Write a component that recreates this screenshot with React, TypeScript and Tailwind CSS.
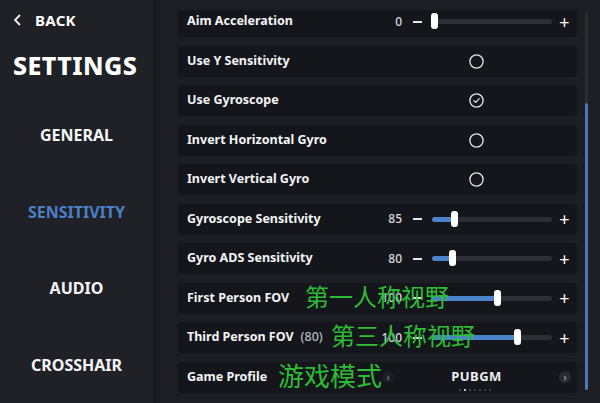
import React from 'react';

type Row =
  | { kind: 'slider'; label: string; value: string; pos: number; note?: string }
  | { kind: 'check'; label: string; checked: boolean }
  | { kind: 'profile'; label: string; value: string };

const rows: Row[] = [
  { kind: 'slider', label: 'Aim Acceleration', value: '0', pos: 2 },
  { kind: 'check', label: 'Use Y Sensitivity', checked: false },
  { kind: 'check', label: 'Use Gyroscope', checked: true },
  { kind: 'check', label: 'Invert Horizontal Gyro', checked: false },
  { kind: 'check', label: 'Invert Vertical Gyro', checked: false },
  { kind: 'slider', label: 'Gyroscope Sensitivity', value: '85', pos: 22 },
  { kind: 'slider', label: 'Gyro ADS Sensitivity', value: '80', pos: 20 },
  { kind: 'slider', label: 'First Person FOV', value: '100', pos: 65 },
  { kind: 'slider', label: 'Third Person FOV', value: '100', pos: 85, note: '(80)' },
  { kind: 'profile', label: 'Game Profile', value: 'PUBGM' },
];

const navItems = ['GENERAL', 'SENSITIVITY', 'AUDIO', 'CROSSHAIR'];

function Slider({ value, pos }: { value: string; pos: number }) {
  return (
    <div className="flex h-full w-[197px] items-center">
      <div className="w-[22px] text-right text-[12px] font-medium text-[#d8dae0]">{value}</div>
      <div className="flex w-[30px] justify-center">
        <div className="h-[2px] w-[9px] bg-[#e6e7ea]" />
      </div>
      <div className="relative h-[5px] w-[120px] rounded-full bg-[#2b2e35]">
        <div className="absolute left-0 top-0 h-full rounded-l-full bg-[#4b82cc]" style={{ width: pos }} />
        <div
          className="absolute top-[-6px] h-[16px] w-[7px] rounded-[3px] bg-white"
          style={{ left: Math.max(pos - 3.5, -1) }}
        />
      </div>
      <div className="flex w-[25px] justify-center text-[18px] leading-none text-white">+</div>
    </div>
  );
}

function Check({ checked }: { checked: boolean }) {
  return (
    <div className="flex h-full w-[197px] items-center pl-[89px]">
      <svg width="15" height="15" viewBox="0 0 15 15">
        <circle cx="7.5" cy="7.5" r="6.6" fill="none" stroke="#e8e9ec" strokeWidth="1.3" />
        {checked && (
          <path d="M4.8 7.6 L6.8 9.4 L10.2 5.6" fill="none" stroke="#e8e9ec" strokeWidth="1.2" strokeLinecap="round" strokeLinejoin="round" />
        )}
      </svg>
    </div>
  );
}

function Profile({ value }: { value: string }) {
  return (
    <div className="relative flex h-full w-[197px] items-center justify-between pl-[2px] pr-[6px]">
      <div className="flex h-[12px] w-[12px] items-center justify-center rounded-full bg-[#1c1f26] text-[10px] leading-none text-[#8a8d95]">‹</div>
      <div className="text-[13px] font-bold tracking-[0.5px] text-[#eceef1]">{value}</div>
      <div className="flex h-[12px] w-[12px] items-center justify-center rounded-full bg-[#272a31] text-[10px] leading-none text-[#b8bbc2]">›</div>
      <div className="absolute bottom-[2px] left-[79px] flex gap-[3px]">
        {[0, 1, 2, 3, 4, 5, 6].map((i) => (
          <div key={i} className={`h-[2px] w-[2px] rounded-full ${i === 1 ? 'bg-white' : 'bg-[#4a4d55]'}`} />
        ))}
      </div>
    </div>
  );
}

export default function App() {
  return (
    <div
      className="flex h-[403px] w-[600px] overflow-hidden bg-[#1c1e24]"
      style={{ fontFamily: '"Noto Sans", "Open Sans", "Noto Sans CJK SC", sans-serif' }}
    >
      {/* Menú lateral */}
      <aside className="flex w-[153px] shrink-0 flex-col bg-[#1f2127] text-white">
        <div className="flex h-[40px] items-center pl-[13px]">
          <svg width="10" height="12" viewBox="0 0 10 12" className="mr-[12px]">
            <path d="M7 1 L2 6 L7 11" fill="none" stroke="#f2f3f5" strokeWidth="1.8" />
          </svg>
          <span className="text-[15px] font-bold tracking-[0.3px]">BACK</span>
        </div>
        <div className="flex h-[52px] items-center pl-[13px] text-[25px] font-extrabold tracking-[0.4px]">SETTINGS</div>
        <div className="mt-[6px] flex flex-col">
          {navItems.map((n) => (
            <div
              key={n}
              className={`flex h-[76.5px] items-center justify-center text-[16px] font-bold ${
                n === 'SENSITIVITY' ? 'text-[#4b7fc6]' : 'text-[#f4f5f7]'
              }`}
            >
              {n}
            </div>
          ))}
        </div>
      </aside>
      <div className="w-[6px] shrink-0 bg-[#17191e]" />

      {/* Contenido */}
      <main className="relative flex flex-1 pl-[19px]">
        <div className="mt-[10px] w-[399px] overflow-hidden">
          <div className="-mt-[4px] flex flex-col gap-[8.5px]">
            {rows.map((r) => (
              <div key={r.label} className="flex h-[31px] items-center rounded-[4px] bg-[#14161b]">
                <div className="flex w-[202px] items-center pl-[9px] text-[12.5px] font-bold text-[#f3f4f6]">
                  {r.label}
                  {r.kind === 'slider' && r.note && (
                    <span className="ml-[7px] font-medium text-[#b4b7be]">{r.note}</span>
                  )}
                </div>
                {r.kind === 'slider' && <Slider value={r.value} pos={r.pos} />}
                {r.kind === 'check' && <Check checked={r.checked} />}
                {r.kind === 'profile' && <Profile value={r.value} />}
              </div>
            ))}
          </div>
        </div>
        {/* Barra de scroll */}
        <div className="ml-[8px] mt-[12px] flex h-[378px] w-[3px] flex-col rounded-full bg-[#2a2d34]">
          <div className="mt-[91px] flex-1 rounded-full bg-[#4a78b8]" />
        </div>

        {/* Textos superpuestos */}
        <div
          className="absolute left-[146px] top-[284px] text-[24px] leading-none text-[#2dbd35]"
          style={{ fontFamily: '"Noto Sans CJK SC", sans-serif' }}
        >
          第一人称视野
        </div>
        <div
          className="absolute left-[172px] top-[323px] text-[24px] leading-none text-[#2dbd35]"
          style={{ fontFamily: '"Noto Sans CJK SC", sans-serif' }}
        >
          第三人称视野
        </div>
        <div
          className="absolute left-[119px] top-[362px] text-[26px] leading-none text-[#2dbd35]"
          style={{ fontFamily: '"Noto Sans CJK SC", sans-serif' }}
        >
          游戏模式
        </div>
      </main>
    </div>
  );
}
